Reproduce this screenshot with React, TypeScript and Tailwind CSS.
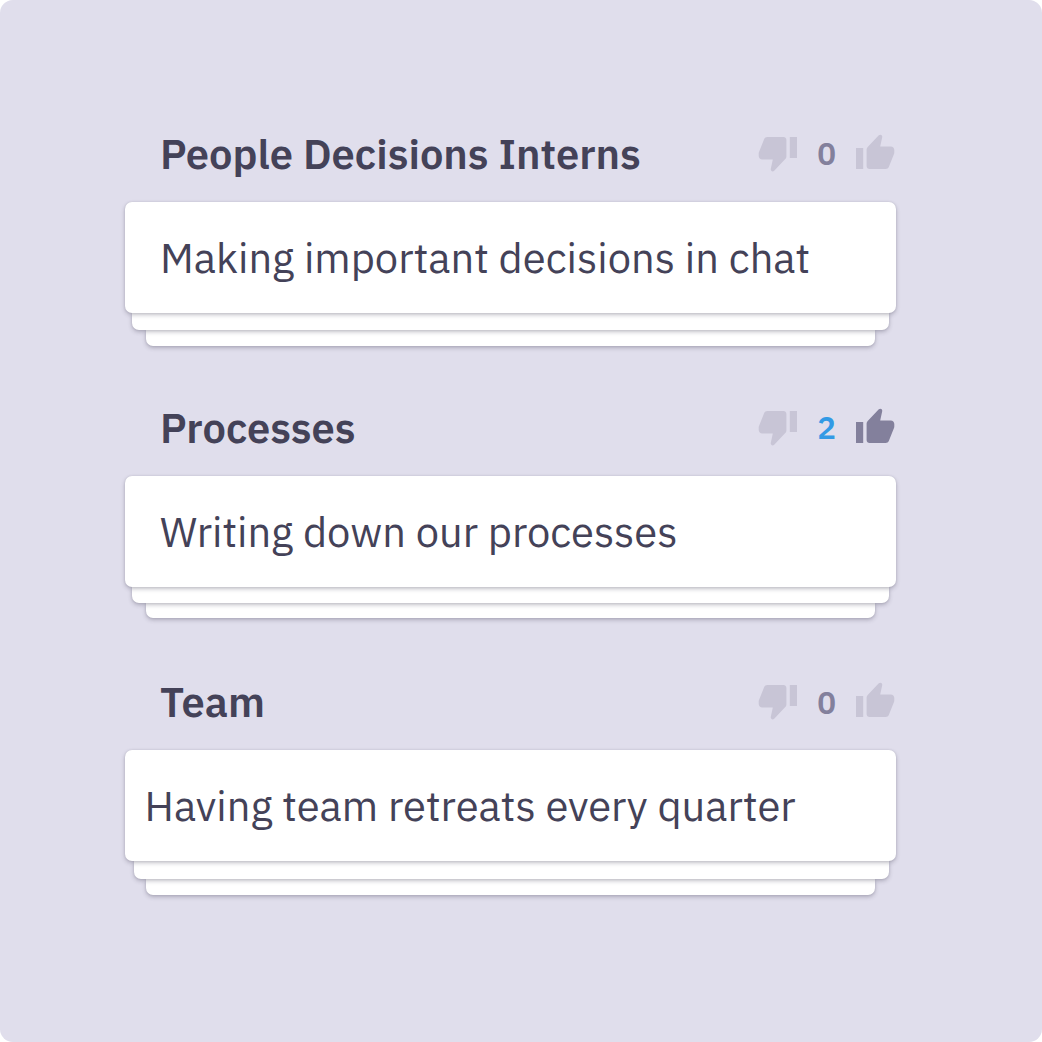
type Group = {
  title: string;
  card: string;
  cardClass: string;
  votes: number;
  middleClass: string;
  lastClass: string;
};

const groups: Group[] = [
  {
    title: 'People Decisions Interns',
    card: 'Making important decisions in chat',
    cardClass: 'pl-[35px]',
    votes: 0,
    middleClass: 'ml-[7px] mr-[7px] h-[17px]',
    lastClass: 'h-[16px]',
  },
  {
    title: 'Processes',
    card: 'Writing down our processes',
    cardClass: 'pl-[35px]',
    votes: 2,
    middleClass: 'ml-[7px] mr-[7px] h-[16px]',
    lastClass: 'h-[15.5px]',
  },
  {
    title: 'Team',
    card: 'Having team retreats every quarter',
    cardClass: 'pl-[19.5px]',
    votes: 0,
    middleClass: 'ml-[9px] mr-[7px] h-[17.8px]',
    lastClass: 'h-[15.8px]',
  },
];

const layer =
  'rounded-b-[7px] bg-white shadow-[0_2px_4px_rgba(68,66,88,0.32),0_0_2px_rgba(68,66,88,0.16)]';

function Thumb({ className }: { className: string }) {
  return (
    <svg viewBox="0 0 42 42" className={`size-[42px] shrink-0 ${className}`}>
      <path d="M2 16h7.2v21H2z" />
      <path d="M12.6 17.6c0-1 .4-1.9 1.1-2.6L24.8 3.3c.9-.9 2.2-.9 2.9 0 .5.5.7 1.2.5 2L26.2 14.4H36.8c2 0 3.5 1.6 3.5 3.5v2.6c0 .6-.1 1.1-.3 1.6l-5.1 12.7c-.6 1.4-1.8 2.2-3.3 2.2H15.6c-1.7 0-3-1.3-3-3z" />
    </svg>
  );
}

function VoteGroup({ group }: { group: Group }) {
  return (
    <section className="h-[274.2px]">
      <header className="flex h-[78.5px] items-start justify-between pl-[35px]">
        <h2 className="h-[60px] whitespace-nowrap font-['IBM_Plex_Sans','Noto_Sans',sans-serif] text-[41.67px] leading-[60px] font-semibold">
          {group.title}
        </h2>
        <div className="flex h-[60px] items-center">
          <Thumb className="rotate-180 fill-[#c8c5d6]" />
          <span
            className={`w-[55px] pt-[1.3px] text-center font-['IBM_Plex_Sans','Noto_Sans',sans-serif] text-[31.25px] leading-[59px] font-semibold ${
              group.votes > 0 ? 'text-[#329ae5]' : 'text-[#83809c]'
            }`}
          >
            {group.votes}
          </span>
          <Thumb className={group.votes > 0 ? 'fill-[#83809c]' : 'fill-[#c8c5d6]'} />
        </div>
      </header>
      <div
        className={`relative z-20 flex h-[111.1px] items-center rounded-[7px] bg-white whitespace-nowrap font-['IBM_Plex_Sans','Open_Sans',sans-serif] text-[41.67px] leading-[56px] shadow-[0_2px_4px_rgba(68,66,88,0.32),0_0_2px_rgba(68,66,88,0.16)] ${group.cardClass}`}
      >
        {group.card}
      </div>
      <div className={`relative z-10 ${layer} ${group.middleClass}`} />
      <div className={`mx-[21px] ${layer} ${group.lastClass}`} />
    </section>
  );
}

export default function App() {
  return (
    <div className="h-[1042px] w-[1042px] bg-white">
      <main className="h-full w-full rounded-[13px] bg-[#e0deec] pt-[123px] text-[#444258]">
        <div className="ml-[125px] w-[771px]">
          {groups.map((group) => (
            <VoteGroup key={group.title} group={group} />
          ))}
        </div>
      </main>
    </div>
  );
}
